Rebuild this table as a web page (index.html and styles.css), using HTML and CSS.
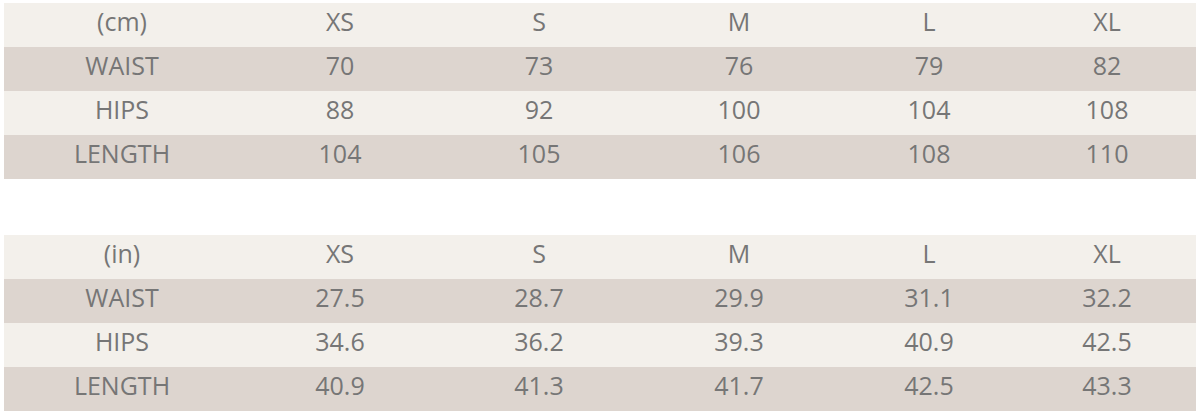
FILE: index.html
```html
<!DOCTYPE html>
<html lang="en">
<head>
<meta charset="utf-8">
<title>Size chart</title>
<link rel="stylesheet" href="styles.css">
</head>
<body>
<main class="charts">
  <section class="chart">
    <div class="row row-light"><span>(cm)</span><span>XS</span><span>S</span><span>M</span><span>L</span><span>XL</span></div>
    <div class="row row-dark"><span>WAIST</span><span>70</span><span>73</span><span>76</span><span>79</span><span>82</span></div>
    <div class="row row-light"><span>HIPS</span><span>88</span><span>92</span><span>100</span><span>104</span><span>108</span></div>
    <div class="row row-dark"><span>LENGTH</span><span>104</span><span>105</span><span>106</span><span>108</span><span>110</span></div>
  </section>
  <section class="chart">
    <div class="row row-light"><span>(in)</span><span>XS</span><span>S</span><span>M</span><span>L</span><span>XL</span></div>
    <div class="row row-dark"><span>WAIST</span><span>27.5</span><span>28.7</span><span>29.9</span><span>31.1</span><span>32.2</span></div>
    <div class="row row-light"><span>HIPS</span><span>34.6</span><span>36.2</span><span>39.3</span><span>40.9</span><span>42.5</span></div>
    <div class="row row-dark"><span>LENGTH</span><span>40.9</span><span>41.3</span><span>41.7</span><span>42.5</span><span>43.3</span></div>
  </section>
</main>
</body>
</html>
```
FILE: styles.css
```css
html, body {
  margin: 0;
  padding: 0;
  background: #ffffff;
}

body {
  font-family: "Open Sans", "DejaVu Sans", sans-serif;
  color: #767676;
}

.charts {
  display: flex;
  flex-direction: column;
  gap: 56px;
  padding: 3px 4px 0 4px;
  width: 1192px;
}

.chart {
  display: flex;
  flex-direction: column;
}

.row {
  display: grid;
  grid-template-columns: 236px 200px 198px 202px 178px 178px;
  height: 44px;
  box-sizing: border-box;
  padding-bottom: 8px;
  font-size: 25px;
  line-height: 36px;
  text-align: center;
}

.row-light {
  background: #f3f0eb;
}

.row-dark {
  background: #ddd5cf;
}
```
